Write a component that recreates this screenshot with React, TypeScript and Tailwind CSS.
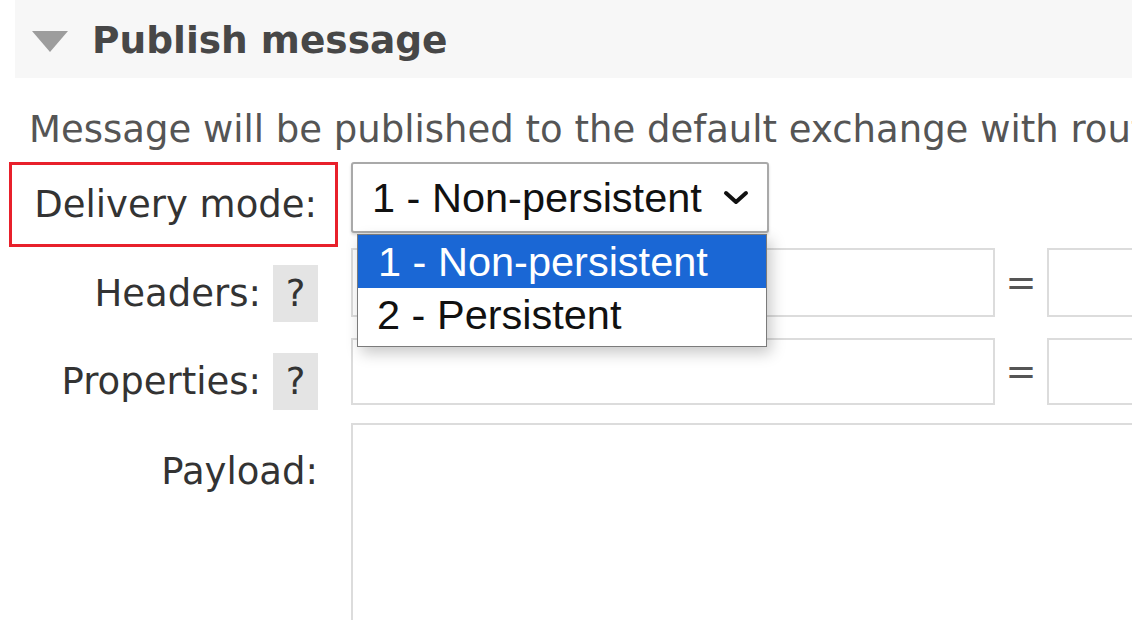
const verdana = "font-['DejaVu_Sans',Verdana,sans-serif]";
const arial = "font-['Liberation_Sans',Arial,sans-serif]";

function HelpBox() {
  return (
    <span className="flex h-[57px] w-[45px] shrink-0 items-center justify-center bg-[#e4e4e4] text-[37px] leading-[43px] text-[#333]">
      ?
    </span>
  );
}

function PairInputs({ height }: { height: string }) {
  return (
    <div className="flex shrink-0 items-center">
      <div className={`w-[644px] shrink-0 border-2 border-[#dcdcdc] bg-white ${height}`} />
      <span className="w-[52px] shrink-0 text-center text-[37px] leading-[43px] text-[#555]">=</span>
      <div className={`w-[200px] shrink-0 border-2 border-[#dcdcdc] bg-white ${height}`} />
    </div>
  );
}

export default function App() {
  return (
    <div
      className={`relative h-[620px] w-[1132px] overflow-hidden bg-white text-[#333] ${verdana}`}
    >
      {/* section header */}
      <div className="ml-[15px] flex h-[78px] items-start bg-[#f7f7f7]">
        <svg
          width="36"
          height="21"
          viewBox="0 0 36 21"
          className="ml-[17px] mt-[31px] shrink-0"
        >
          <polygon points="0,0 36,0 18,21" fill="#9d9d9d" />
        </svg>
        <h2 className="ml-[24px] mt-[19px] whitespace-nowrap text-[37.5px] font-bold leading-[43px] text-[#474747]">
          Publish message
        </h2>
      </div>

      <p className="mt-[30px] whitespace-nowrap pl-[29px] text-[37px] leading-[43px] text-[#555]">
        Message will be published to the default exchange with routing key
      </p>

      {/* delivery mode */}
      <div className="mt-[11px] flex items-start">
        <div className="ml-[9px] flex h-[85px] w-[329px] shrink-0 items-center justify-end border-[3px] border-[#e8202b] pr-[18px]">
          <span className="whitespace-nowrap text-[37px] leading-[43px]">Delivery mode:</span>
        </div>
        <div
          className={`ml-[13px] flex h-[71px] w-[418px] shrink-0 items-center justify-between rounded-[3px] border-2 border-[#a9a9a9] bg-white pl-[19px] pr-[18px] shadow-[0_2px_3px_rgba(0,0,0,0.15)] ${arial}`}
        >
          <span className="whitespace-nowrap text-[41.5px] leading-[47px] text-[#111]">
            1 - Non-persistent
          </span>
          <svg width="26" height="16" viewBox="0 0 26 16">
            <polyline
              points="3,3 13,12 23,3"
              fill="none"
              stroke="#111"
              strokeWidth="4"
              strokeLinecap="round"
              strokeLinejoin="round"
            />
          </svg>
        </div>
      </div>

      {/* headers */}
      <div className="flex h-[91px] items-start">
        <div className="flex w-[351px] shrink-0 items-center justify-end gap-[12px] pr-[33px] pt-[18px]">
          <span className="whitespace-nowrap text-[37px] leading-[43px]">Headers:</span>
          <HelpBox />
        </div>
        <div className="mt-[1px] shrink-0">
          <PairInputs height="h-[69px]" />
        </div>
      </div>

      {/* properties */}
      <div className="flex h-[85px] items-start">
        <div className="flex w-[351px] shrink-0 items-center justify-end gap-[12px] pr-[33px] pt-[15px]">
          <span className="whitespace-nowrap text-[37px] leading-[43px]">Properties:</span>
          <HelpBox />
        </div>
        <PairInputs height="h-[67px]" />
      </div>

      {/* payload */}
      <div className="flex items-start">
        <div className="flex w-[351px] shrink-0 justify-end pr-[33px] pt-[27px]">
          <span className="whitespace-nowrap text-[37px] leading-[43px]">Payload:</span>
        </div>
        <div className="h-[300px] w-[900px] shrink-0 border-2 border-[#dcdcdc] bg-white" />
      </div>

      {/* open select list */}
      <div
        className={`absolute left-[357px] top-[234px] w-[410px] border border-[#7b7b7b] bg-white pb-[5px] shadow-[4px_6px_14px_rgba(0,0,0,0.22)] ${arial}`}
      >
        <div className="flex h-[53px] items-center bg-[#1a67d5] pl-[20px] text-[41.5px] leading-[47px] text-white">
          1 - Non-persistent
        </div>
        <div className="flex h-[53px] items-center pl-[19px] text-[41.5px] leading-[47px] text-[#111]">
          2 - Persistent
        </div>
      </div>
    </div>
  );
}
